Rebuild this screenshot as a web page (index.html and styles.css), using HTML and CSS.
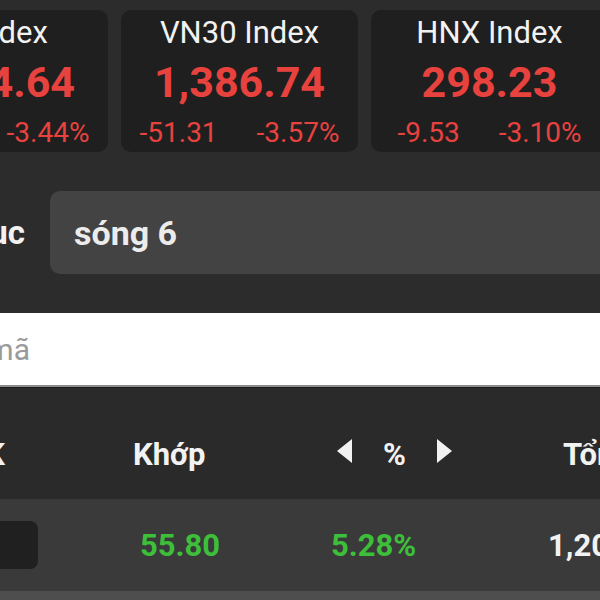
FILE: index.html
```html
<!DOCTYPE html>
<html lang="vi">
<head>
    <meta charset="UTF-8">
    <meta name="viewport" content="width=device-width, initial-scale=1.0">
    <title>Bảng giá</title>
    <link rel="stylesheet" href="styles.css">
</head>
<body>

    <div class="indexes">
        <div class="card">
            <div class="card-title">VNIndex</div>
            <div class="card-value">1,234.64</div>
            <div class="card-change"><span>-44.00</span><span>-3.44%</span></div>
        </div>
        <div class="card">
            <div class="card-title">VN30 Index</div>
            <div class="card-value">1,386.74</div>
            <div class="card-change"><span>-51.31</span><span>-3.57%</span></div>
        </div>
        <div class="card">
            <div class="card-title">HNX Index</div>
            <div class="card-value">298.23</div>
            <div class="card-change"><span>-9.53</span><span>-3.10%</span></div>
        </div>
    </div>

    <div class="filter">
        <div class="filter-label"><span>Danh mục</span></div>
        <div class="filter-box">sóng 6</div>
    </div>

    <div class="search">
        <div class="search-hint"><span>Nhập mã</span></div>
    </div>

    <div class="thead">
        <div class="th-code"><span>CK</span></div>
        <div class="th-match">Khớp</div>
        <div class="th-pct">
            <span class="arrow arrow-left"></span>
            <span>%</span>
            <span class="arrow arrow-right"></span>
        </div>
        <div class="th-total">Tổng KL</div>
    </div>

    <div class="trow">
        <div class="td-code"><div class="code-box"></div></div>
        <div class="td-match up">55.80</div>
        <div class="td-pct up">5.28%</div>
        <div class="td-total">1,203,400</div>
    </div>
    <div class="trow-next"></div>

</body>
</html>
```

FILE: styles.css
```css
body {
    margin: 0;
    width: 600px;
    height: 600px;
    overflow: hidden;
    background-color: #2c2c2c;
    font-family: Roboto, "Liberation Sans", sans-serif;
    color: #f2f2f2;
}
.indexes {
    display: flex;
    gap: 13px;
    margin-left: -129px;
    padding-top: 10px;
}
.card {
    flex: none;
    width: 237px;
    height: 142px;
    background-color: #1f1f1f;
    border-radius: 10px;
    display: flex;
    flex-direction: column;
    align-items: center;
}
.card-title {
    font-size: 31px;
    margin-top: 3px;
    height: 40px;
    line-height: 40px;
}
.card-value {
    font-size: 43px;
    font-weight: bold;
    color: #e8423f;
    height: 50px;
    line-height: 50px;
    margin-top: 4px;
}
.card-change {
    display: flex;
    gap: 39px;
    font-size: 28px;
    color: #e8423f;
    margin-top: 11px;
    line-height: 30px;
}
.filter {
    display: flex;
    align-items: center;
    padding-top: 39px;
    height: 83px;
}
.filter-label {
    width: 25px;
    margin-right: 25px;
    display: flex;
    justify-content: flex-end;
    white-space: nowrap;
    font-size: 33px;
    font-weight: bold;
}
.filter-box {
    flex: none;
    width: 580px;
    height: 83px;
    box-sizing: border-box;
    padding-left: 24px;
    display: flex;
    align-items: center;
    background-color: #434343;
    border-radius: 10px;
    font-size: 34px;
    font-weight: bold;
    color: #ececec;
}
.search {
    margin-top: 39px;
    height: 72px;
    background-color: #ffffff;
    border-bottom: 2px solid #8c8c8c;
    display: flex;
    align-items: center;
}
.search-hint {
    width: 30px;
    display: flex;
    justify-content: flex-end;
    white-space: nowrap;
    font-size: 30px;
    color: #9a9a9a;
}
.thead {
    display: flex;
    align-items: center;
    height: 112px;
    box-sizing: border-box;
    padding-top: 22px;
    background-color: #2a2a2a;
    border-top: 1px solid #1c1c1c;
    font-size: 31px;
    font-weight: bold;
    white-space: nowrap;
}
.th-code {
    flex: none;
    width: 5px;
    margin-right: 128px;
    display: flex;
    justify-content: flex-end;
}
.th-match {
    flex: none;
    width: 194px;
}
.th-pct {
    flex: none;
    width: 211px;
    padding-left: 10px;
    display: flex;
    align-items: center;
    gap: 31px;
}
.arrow {
    width: 0;
    height: 0;
    margin-top: -8px;
    border-top: 12px solid transparent;
    border-bottom: 12px solid transparent;
}
.arrow-left {
    border-right: 15px solid #f2f2f2;
}
.arrow-right {
    border-left: 15px solid #f2f2f2;
}
.th-total {
    padding-left: 15px;
}
.trow {
    display: flex;
    align-items: center;
    height: 92px;
    background-color: #3a3a3a;
    font-size: 31px;
    font-weight: bold;
    white-space: nowrap;
}
.td-code {
    flex: none;
    width: 140px;
}
.code-box {
    width: 38px;
    height: 48px;
    background-color: #202020;
    border-radius: 0 8px 8px 0;
}
.td-match {
    flex: none;
    width: 191px;
}
.td-pct {
    flex: none;
    width: 217px;
}
.up {
    color: #3dbf3a;
}
.trow-next {
    height: 10px;
    background-color: #4e4e4e;
}
```
